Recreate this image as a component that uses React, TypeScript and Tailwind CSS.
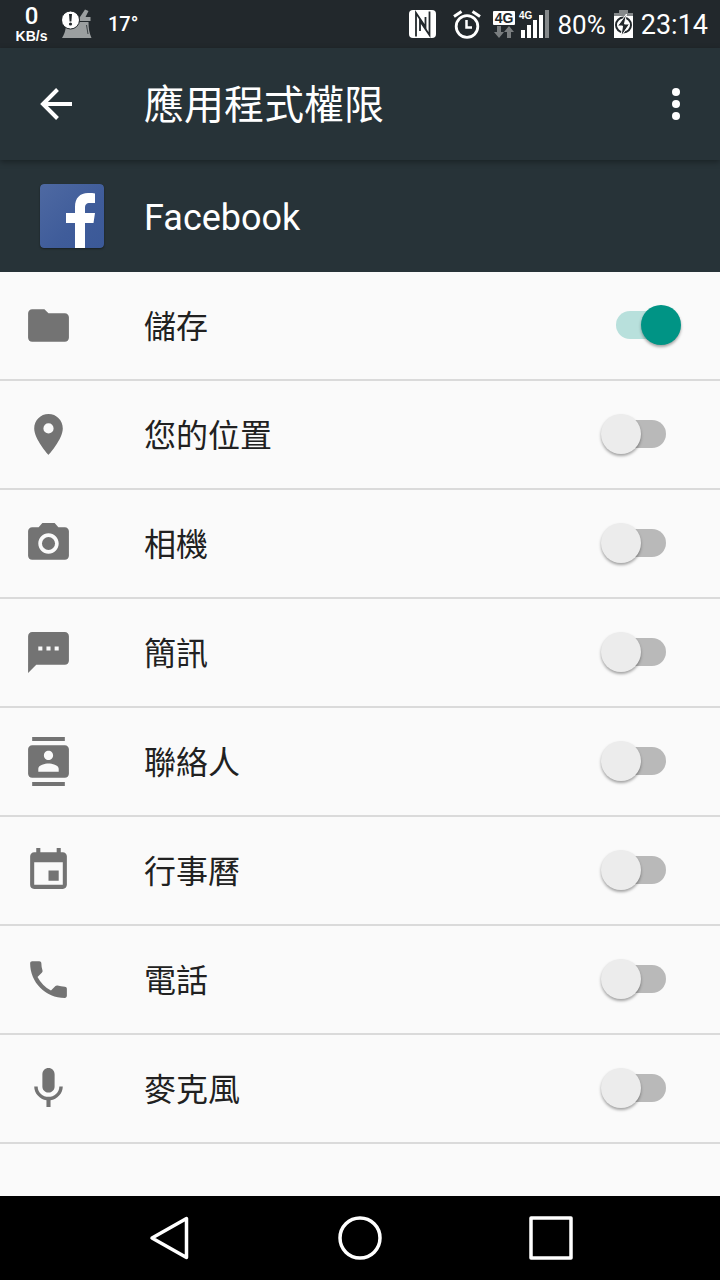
import { useState } from 'react';
import type { ReactNode } from 'react';
import { MdContacts, MdEvent, MdFolder, MdPhone, MdPhotoCamera, MdPlace, MdTextsms } from 'react-icons/md';

interface Permission {
  id: string;
  label: string;
  icon: ReactNode;
}

function MicIcon() {
  return (
    <svg viewBox="0 0 24 24" fill="currentColor" className="size-[49px]">
      <path d="M12 14c1.66 0 2.99-1.34 2.99-3L15 5c0-1.66-1.34-3-3-3S9 3.34 9 5v6c0 1.66 1.34 3 3 3zm5.3-3c0 3-2.54 5.1-5.3 5.1S6.7 14 6.7 11H5c0 3.41 2.72 6.23 6 6.72V21h2v-3.28c3.28-.48 6-3.3 6-6.72h-1.7z" />
    </svg>
  );
}

const permissions: Permission[] = [
  { id: 'storage', label: '儲存', icon: <MdFolder className="size-[49px]" /> },
  { id: 'location', label: '您的位置', icon: <MdPlace className="size-[49px]" /> },
  { id: 'camera', label: '相機', icon: <MdPhotoCamera className="size-[49px]" /> },
  { id: 'sms', label: '簡訊', icon: <MdTextsms className="size-[49px]" /> },
  { id: 'contacts', label: '聯絡人', icon: <MdContacts className="size-[49px]" /> },
  { id: 'calendar', label: '行事曆', icon: <MdEvent className="size-[49px]" /> },
  { id: 'phone', label: '電話', icon: <MdPhone className="size-[49px]" /> },
  { id: 'microphone', label: '麥克風', icon: <MicIcon /> },
];

function CleanerIcon() {
  return (
    <svg viewBox="0 0 30 30" className="h-[30px] w-[30px]">
      <path d="M23 .5 26.500 2 23.500 8H28.500V12H17l1-4z" fill="#9b9fa0" />
      <path d="M4 17 18 13h8.500c0 6 .8 11 3 16H0c2-3 3.500-7 4-12z" fill="#9b9fa0" />
      <path d="M24.500 16l1.500 9" fill="none" stroke="#22282c" strokeWidth="0.800" />
      <circle cx="8.500" cy="11" r="9" fill="#fff" stroke="#22282c" strokeWidth="1" />
      <path d="M7 5h3l-.6 7.500H7.600z" fill="#22282c" />
      <circle cx="8.500" cy="15" r="1.600" fill="#22282c" />
    </svg>
  );
}

function NfcIcon() {
  return (
    <svg viewBox="0 0 27 28" className="h-7 w-[27px]">
      <rect width="27" height="28" rx="4" fill="#fff" />
      <path d="M7 26.500V3L16.500 17V7" fill="none" stroke="#22282c" strokeWidth="1.800" />
      <path d="M20.500 1.500V25L11 11V21" fill="none" stroke="#22282c" strokeWidth="1.800" />
    </svg>
  );
}

function AlarmIcon() {
  return (
    <svg viewBox="0 0 28 29" fill="none" stroke="#fff" className="h-[29px] w-7">
      <circle cx="14" cy="16.500" r="10.800" strokeWidth="2.800" />
      <path d="M13.500 10v7.500H19" strokeWidth="2.500" />
      <path d="M1 6.500 8.500 1.500M27 6.500 19.500 1.500" strokeWidth="3" />
    </svg>
  );
}

function SignalIcon() {
  return (
    <svg viewBox="0 0 56 29" className="h-[29px] w-14" fontFamily="'Liberation Sans', Arial, sans-serif" fontWeight="700">
      <rect y="1" width="22" height="14" rx="1" fill="#fff" />
      <text x="11" y="13" fontSize="14" textAnchor="middle" fill="#22282c">4G</text>
      <path d="M4 16h4v6h3l-5 6-5-6h3zM14 28h4v-6h3l-5-6-5 6h3z" fill="#7a7e80" />
      <text x="26" y="9" fontSize="10" fill="#fff">4G</text>
      <path d="M28 20h4v8h-4zM34 15h4v13h-4zM40 10h4v18h-4zM46 5h4v23h-4z" fill="#fff" />
      <path d="M52 0h4v28h-4z" fill="#84888a" />
    </svg>
  );
}

function BatteryIcon() {
  return (
    <svg viewBox="0 0 19 28" className="h-7 w-[19px]">
      <path d="M5 0h9v3h5v4H0V3h5z" fill="#84888a" />
      <path d="M0 6h19v22H0z" fill="#fff" />
      <circle cx="9.500" cy="15" r="7.500" fill="none" stroke="#22282c" strokeWidth="2" />
      <path d="M12.500 4 3.500 16h5L7 26.500 15.500 14h-5z" fill="#22282c" stroke="#fff" strokeWidth="1" />
    </svg>
  );
}

function StatusBar() {
  return (
    <div className="flex h-12 items-center bg-[#22282c] pr-3 pl-[15px] font-[Roboto,sans-serif] text-white">
      <div className="flex w-[33px] flex-col items-center">
        <span className="text-2xl leading-6 font-medium">0</span>
        <span className="font-['Liberation_Sans',Arial,sans-serif] text-sm leading-4 font-bold">KB/s</span>
      </div>
      <div className="ml-[14px]">
        <CleanerIcon />
      </div>
      <span className="ml-4 text-xl font-medium">17°</span>
      <div className="ml-auto flex items-center">
        <NfcIcon />
        <div className="ml-[17px]">
          <AlarmIcon />
        </div>
        <div className="ml-3">
          <SignalIcon />
        </div>
        <span className="ml-2 pt-0.5 text-[26px] leading-8">80%</span>
        <div className="mx-2">
          <BatteryIcon />
        </div>
        <span className="pt-0.5 text-[27px] leading-8">23:14</span>
      </div>
    </div>
  );
}

function AppBar() {
  return (
    <header className="relative flex h-28 items-center bg-[#273338] pl-8 text-white shadow-[0_2px_6px_rgba(0,0,0,0.35)]">
      <button type="button" aria-label="返回" className="flex size-12 items-center justify-center">
        <svg viewBox="0 0 32 32" fill="none" stroke="currentColor" strokeWidth="4" className="size-8">
          <path d="M32 16H4M17.500 1.500 3 16l14.500 14.500" />
        </svg>
      </button>
      <h1 className="ml-16 pt-1 text-[40px] leading-14">應用程式權限</h1>
      <button type="button" aria-label="更多選項" className="mr-5 ml-auto flex size-12 items-center justify-center">
        <svg viewBox="0 0 8 32" fill="currentColor" className="h-8 w-2">
          <circle cx="4" cy="4" r="4" />
          <circle cx="4" cy="16" r="4" />
          <circle cx="4" cy="28" r="4" />
        </svg>
      </button>
    </header>
  );
}

function FacebookLogo() {
  return (
    <svg viewBox="0 0 64 64" className="size-16 rounded-[4px] shadow-[0_1px_2px_rgba(0,0,0,0.4)]">
      <defs>
        <linearGradient id="fb-blue" x1="0" y1="0" x2="1" y2="1">
          <stop offset="0" stopColor="#4e69a2" />
          <stop offset="0.6" stopColor="#3f5c9a" />
          <stop offset="1" stopColor="#3b5998" />
        </linearGradient>
      </defs>
      <rect width="64" height="64" rx="4" fill="url(#fb-blue)" />
      <path d="M35 64V39h-9V29h9v-6c0-9 5-14 13-14 3 0 5.500.2 7 .4V19h-5c-4 0-5 2-5 5v5h10l-1.500 10H45v25z" fill="#fff" />
    </svg>
  );
}

function NavBar() {
  return (
    <nav className="flex h-21 items-center justify-center gap-[131px] bg-black text-white">
      <button type="button" aria-label="上一頁" className="flex w-[60px] justify-center">
        <svg viewBox="0 0 44 44" fill="none" stroke="currentColor" strokeWidth="3.500" strokeLinejoin="round" className="size-11">
          <path d="M39.500 2.500v39L5 22z" />
        </svg>
      </button>
      <button type="button" aria-label="主畫面" className="flex w-[60px] justify-center">
        <svg viewBox="0 0 44 44" fill="none" stroke="currentColor" strokeWidth="3.500" className="size-11">
          <circle cx="22" cy="22" r="20" />
        </svg>
      </button>
      <button type="button" aria-label="最近使用" className="flex w-[60px] justify-center">
        <svg viewBox="0 0 44 44" fill="none" stroke="currentColor" strokeWidth="3.500" strokeLinejoin="round" className="size-11">
          <path d="M2 2h40v40H2z" />
        </svg>
      </button>
    </nav>
  );
}

export default function App() {
  const [granted, setGranted] = useState<string[]>(['storage']);

  const toggle = (id: string) => {
    setGranted((prev) => (prev.includes(id) ? prev.filter((p) => p !== id) : [...prev, id]));
  };

  return (
    <div className="flex min-h-screen flex-col bg-[#fafafa] font-[Roboto,'Noto_Sans_CJK_TC',sans-serif]">
      <StatusBar />
      <AppBar />
      <div className="flex h-28 items-center bg-[#273338] pl-10 text-white">
        <FacebookLogo />
        <h2 className="ml-10 pt-1 text-4xl">Facebook</h2>
      </div>

      <ul className="flex-1">
        {permissions.map(({ id, label, icon }) => (
          <li key={id} className="border-b-2 border-[#dadada]">
            <label htmlFor={id} className="flex h-[107px] items-center pr-[39px] pl-6">
              <span className="text-[#737373]">{icon}</span>
              <span className="ml-[71px] pt-[3px] text-[32px] leading-12 text-[#212121]">{label}</span>
              <input
                id={id}
                type="checkbox"
                role="switch"
                checked={granted.includes(id)}
                onChange={() => toggle(id)}
                className="relative ml-auto h-[41px] w-20 shrink-0 appearance-none before:absolute before:top-1.5 before:left-[15px] before:h-7 before:w-[50px] before:rounded-full before:bg-[#b9b9b9] after:absolute after:top-0 after:left-0 after:size-10 after:rounded-full after:bg-[#ececec] after:shadow-[0_2px_3px_rgba(0,0,0,0.35)] checked:before:bg-[#b8e0dc] checked:after:left-10 checked:after:bg-[#009485]"
              />
            </label>
          </li>
        ))}
      </ul>

      <NavBar />
    </div>
  );
}
